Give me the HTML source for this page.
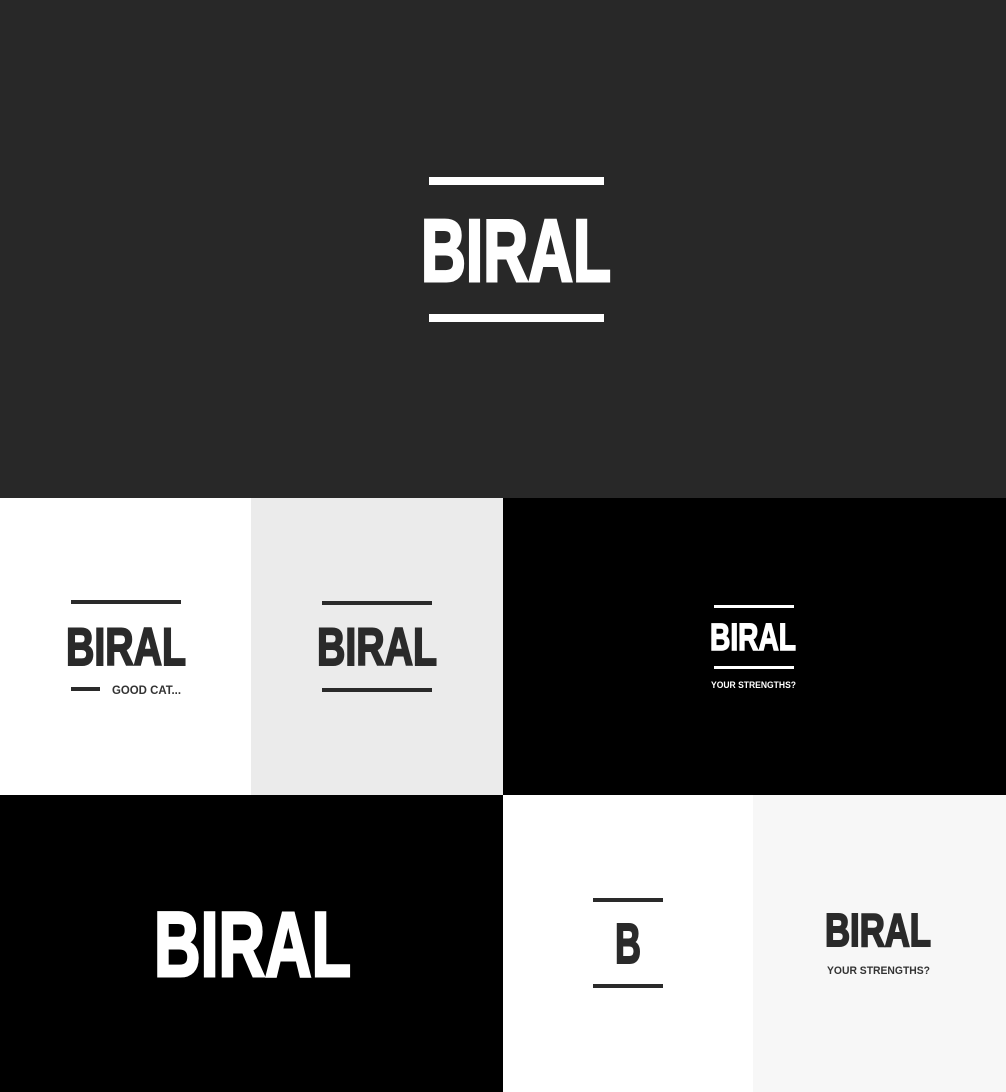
<!DOCTYPE html>
<html><head><meta charset="utf-8"><style>html,body{margin:0;padding:0;background:#282828}svg{display:block}</style></head>
<body>
<svg width="1006" height="1092" viewBox="0 0 1006 1092" xmlns="http://www.w3.org/2000/svg" font-family="Liberation Sans, sans-serif" font-weight="bold">
<rect x="0" y="0" width="1006" height="498" fill="#282828"/>
<rect x="429" y="177" width="175" height="8" fill="#fff"/>
<rect x="429" y="314" width="175" height="8" fill="#fff"/>
<text x="421" y="281" font-size="88" fill="#fff" stroke="#fff" stroke-width="3" textLength="190" lengthAdjust="spacingAndGlyphs">BIRAL</text>

<rect x="0" y="498" width="251" height="297" fill="#fff"/>
<rect x="71" y="600" width="110" height="4" fill="#2a2a2a"/>
<text x="66" y="665" font-size="53" fill="#2a2a2a" stroke="#2a2a2a" stroke-width="2" textLength="120" lengthAdjust="spacingAndGlyphs">BIRAL</text>
<rect x="71" y="687" width="29" height="4" fill="#2a2a2a"/>
<text x="112" y="694" font-size="12" fill="#333" textLength="69" lengthAdjust="spacingAndGlyphs">GOOD CAT...</text>

<rect x="251" y="498" width="252" height="297" fill="#ebebeb"/>
<rect x="322" y="601" width="110" height="4" fill="#2a2a2a"/>
<text x="317" y="665" font-size="53" fill="#2a2a2a" stroke="#2a2a2a" stroke-width="2" textLength="120" lengthAdjust="spacingAndGlyphs">BIRAL</text>
<rect x="322" y="688" width="110" height="4" fill="#2a2a2a"/>

<rect x="503" y="498" width="503" height="297" fill="#000"/>
<rect x="714" y="605" width="80" height="3" fill="#fff"/>
<text x="710" y="650" font-size="38" fill="#fff" stroke="#fff" stroke-width="1.5" textLength="86" lengthAdjust="spacingAndGlyphs">BIRAL</text>
<rect x="714" y="666" width="80" height="3" fill="#fff"/>
<text x="711" y="688" font-size="9" fill="#fff" textLength="85" lengthAdjust="spacingAndGlyphs">YOUR STRENGTHS?</text>

<rect x="0" y="795" width="503" height="297" fill="#000"/>
<text x="154" y="976" font-size="92" fill="#fff" stroke="#fff" stroke-width="3" textLength="197" lengthAdjust="spacingAndGlyphs">BIRAL</text>

<rect x="503" y="795" width="250" height="297" fill="#fff"/>
<rect x="593" y="898" width="70" height="4" fill="#2a2a2a"/>
<text x="615" y="963" font-size="57" fill="#2a2a2a" stroke="#2a2a2a" stroke-width="2" textLength="26" lengthAdjust="spacingAndGlyphs">B</text>
<rect x="593" y="984" width="70" height="4" fill="#2a2a2a"/>

<rect x="753" y="795" width="253" height="297" fill="#f7f7f7"/>
<text x="825" y="946" font-size="46" fill="#2a2a2a" stroke="#2a2a2a" stroke-width="2" textLength="106" lengthAdjust="spacingAndGlyphs">BIRAL</text>
<text x="827" y="974" font-size="11" fill="#333" textLength="103" lengthAdjust="spacingAndGlyphs">YOUR STRENGTHS?</text>
</svg>
</body></html>
